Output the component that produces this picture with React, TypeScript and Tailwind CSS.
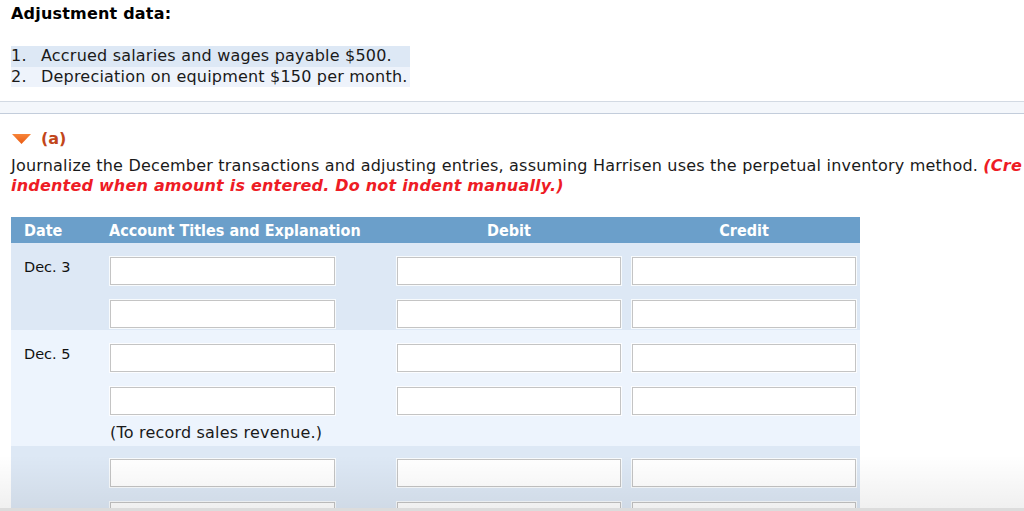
import React from "react";

const sans = { fontFamily: '"DejaVu Sans", Verdana, sans-serif' };
const cond = { fontFamily: '"DejaVu Sans Condensed", "DejaVu Sans", Tahoma, sans-serif' };

function Field() {
  return (
    <input
      type="text"
      className="block h-[28px] w-full border border-[#c4c4c4] bg-white shadow-[0_0_0_1px_rgba(255,255,255,0.8)] outline-none"
    />
  );
}

function Row({ date, children }: { date?: string; children?: React.ReactNode }) {
  return (
    <div className="grid grid-cols-[99px_287px_235px_228px]">
      <div className="pl-[13px] pt-[1px] text-[14.5px] leading-[18px] text-[#111]" style={sans}>
        {date}
      </div>
      <div className="w-[225px]">
        <Field />
        {children}
      </div>
      <div className="w-[224px]">
        <Field />
      </div>
      <div className="w-[224px]">
        <Field />
      </div>
    </div>
  );
}

export default function App() {
  return (
    <div className="relative h-[511px] w-[1024px] overflow-hidden bg-white text-[#1a1a1a]" style={sans}>
      <div className="px-[11px] pt-[4px]">
        <h3 className="text-[16px] font-bold leading-[20px] tracking-[0.2px] text-black">Adjustment data:</h3>

        <ol className="mt-[22px] inline-block text-[16px] leading-[20.5px] tracking-[0.2px]">
          <li className="flex bg-[#dde8f5] pr-[18px]">
            <span className="w-[30px]">1.</span>
            <span>Accrued salaries and wages payable $500.</span>
          </li>
          <li className="flex bg-[#eef3fb] pr-[2px]">
            <span className="w-[30px]">2.</span>
            <span>Depreciation on equipment $150 per month.</span>
          </li>
        </ol>
      </div>

      <div className="mt-[12px] h-[13px] border-y border-t-[#d3dae3] border-b-[#c3cddb] bg-[#f4f7fb]" />

      <div className="px-[11px] pt-[15px]">
        <div className="flex items-center gap-[10px]">
          <svg width="19" height="10" viewBox="0 0 19 10" className="ml-[1px]">
            <defs>
              <linearGradient id="tri" x1="0" y1="0" x2="0" y2="1">
                <stop offset="0" stopColor="#f7853a" />
                <stop offset="1" stopColor="#ea5a12" />
              </linearGradient>
            </defs>
            <polygon points="0,0 19,0 9.5,10" fill="url(#tri)" />
          </svg>
          <span className="text-[16px] font-bold leading-[20px] text-[#c2461a]">(a)</span>
        </div>

        <p className="mt-[7px] whitespace-nowrap text-[16px] leading-[20px] tracking-[0.2px] text-[#1a1a1a]">
          Journalize the December transactions and adjusting entries, assuming Harrisen uses the perpetual inventory method.{" "}
          <span className="font-bold italic text-[#ee1c25]">(Cre</span>
          <br />
          <span className="font-bold italic text-[#ee1c25]">indented when amount is entered. Do not indent manually.)</span>
        </p>

        <div className="mt-[21px] w-[849px]">
          <div
            className="grid h-[26px] grid-cols-[99px_287px_235px_228px] items-center bg-[#6b9fca] pt-[2px] text-[16px] font-bold text-white"
            style={cond}
          >
            <div className="pl-[13px]">Date</div>
            <div className="-ml-[1px]">Account Titles and Explanation</div>
            <div className="w-[224px] text-center">Debit</div>
            <div className="w-[224px] text-center">Credit</div>
          </div>

          <div className="flex flex-col gap-[15px] bg-[#dde8f5] pb-[2px] pt-[14px]">
            <Row date="Dec. 3" />
            <Row />
          </div>

          <div className="flex flex-col gap-[15px] bg-[#edf4fd] pt-[14px]">
            <Row date="Dec. 5" />
            <Row>
              <div className="mt-[8px] pb-[3px] text-[16px] leading-[20px] tracking-[0.2px] text-[#1a1a1a]">
                (To record sales revenue.)
              </div>
            </Row>
          </div>

          <div className="flex flex-col gap-[15px] bg-[#dde8f5] pb-[14px] pt-[13px]">
            <Row />
            <Row />
          </div>
        </div>
      </div>

      <div className="pointer-events-none absolute inset-x-0 bottom-0 h-[56px] border-b-[3px] border-[#dcdcdc] bg-gradient-to-b from-white/0 to-black/[0.06]" />
    </div>
  );
}
